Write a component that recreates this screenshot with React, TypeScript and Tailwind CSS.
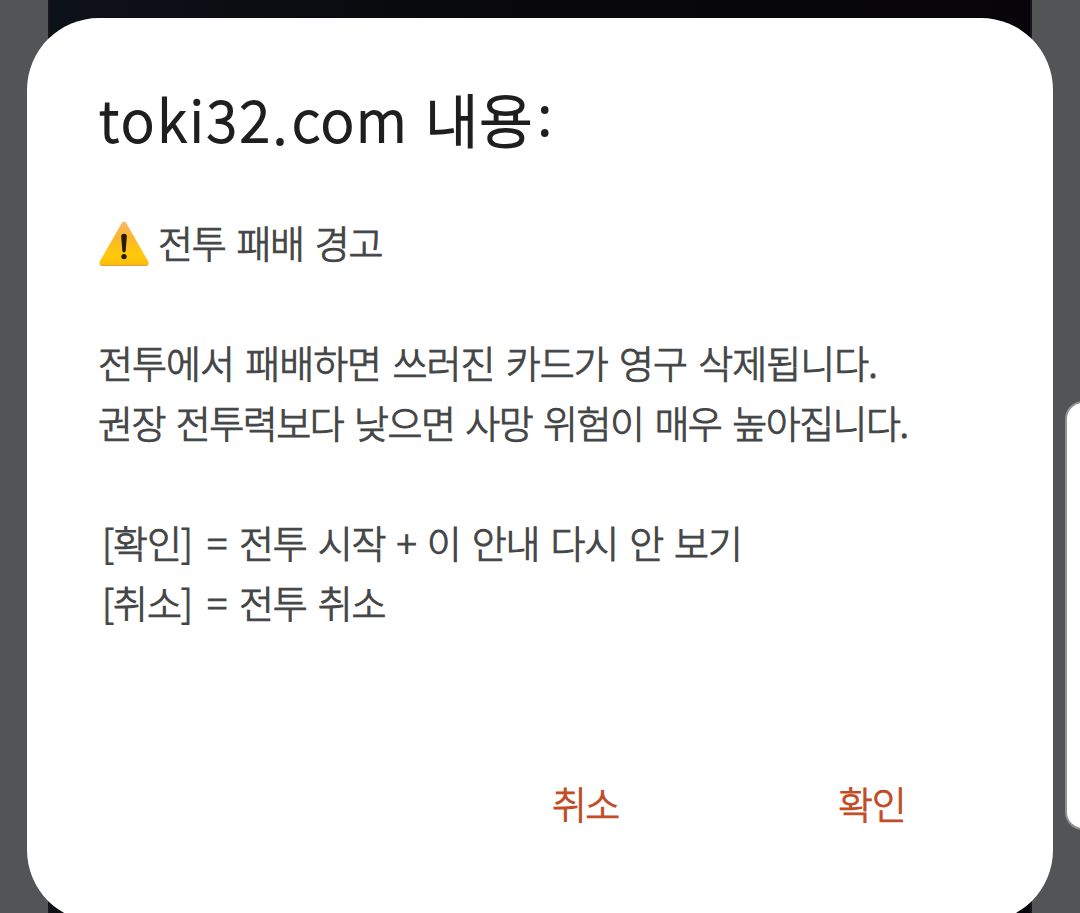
const choices = [
  { label: '[확인]', description: '전투 시작 + 이 안내 다시 안 보기' },
  { label: '[취소]', description: '전투 취소' },
];

function WarningIcon() {
  return (
    <svg viewBox="0 0 50 46" className="relative left-px top-[2px] h-[46px] w-[50px] shrink-0" aria-hidden="true">
      <defs>
        <linearGradient id="warning-fill" x1="0" y1="0" x2="0" y2="1">
          <stop offset="0" stopColor="#fbb66a" />
          <stop offset="0.35" stopColor="#fcb52c" />
          <stop offset="0.75" stopColor="#ffca0a" />
          <stop offset="1" stopColor="#fbbd0c" />
        </linearGradient>
      </defs>
      <path
        d="M22.8 2Q25 -0.6 27.2 2L49.2 40.4Q50.6 44.6 46.8 44.9H3.2Q-0.6 44.6 0.8 40.4Z"
        fill="url(#warning-fill)"
      />
      <path d="M2 43.6Q3 44.4 5 44.4H45Q47 44.4 48 43.6" fill="none" stroke="#e5a23a" strokeWidth="1.2" />
      <path d="M22.2 15.5Q22.2 12.8 25 12.8Q27.8 12.8 27.8 15.5L26.7 29.5Q26.4 31.6 25 31.6Q23.6 31.6 23.3 29.5Z" fill="#241b0b" />
      <circle cx="25" cy="35.6" r="2.7" fill="#241b0b" />
    </svg>
  );
}

function ConfirmDialog() {
  return (
    <div
      role="alertdialog"
      className="absolute left-[27px] top-[18px] h-[904px] w-[1026px] rounded-[72px] bg-white pl-[71px] pt-[58px] text-[38px] font-light leading-[60px] tracking-[-1.3px] text-[#444546] [word-spacing:4px] [-webkit-text-stroke:1px_currentColor]"
    >
      <h1 className="flex h-[84px] items-center whitespace-pre pl-px text-[56px] leading-[84px] text-[#1f1f20] [-webkit-text-stroke:1.9px_currentColor]">
        <span className="w-[174px] tracking-[3px]">toki32</span>
        <span className="relative top-[2px] w-[19px]">.</span>
        <span className="w-[133px] tracking-[2px]">com</span>
        <span className="text-[58px] tracking-[1px]">내용</span>
        <span className="relative -top-[7px] pl-[4px]">:</span>
      </h1>

      <div className="mt-[52px] flex h-[60px] items-center gap-[10px]">
        <WarningIcon />
        <p>전투 패배 경고</p>
      </div>

      <div className="mt-[60px] whitespace-pre">
        <p className="tracking-[-1px]">전투에서 패배하면 쓰러진 카드가 영구 삭제됩니다.</p>
        <p className="tracking-[-1.5px]">권장 전투력보다 낮으면 사망 위험이 매우 높아집니다.</p>
      </div>

      <div className="mt-[60px] whitespace-pre">
        {choices.map((choice) => (
          <p key={choice.label} className="flex pl-[4px]">
            <span className="w-[105px] tracking-[-1px]">{choice.label}</span>
            <span className="w-[32px]">=</span>
            <span className="tracking-[-1.2px]">{choice.description}</span>
          </p>
        ))}
      </div>

      <div className="mt-[141px] flex pl-[454px] text-[#c24b25]">
        <button type="button" className="w-[286px] text-left tracking-[-1.6px]">취소</button>
        <button type="button" className="text-left tracking-[-1.3px]">확인</button>
      </div>
    </div>
  );
}

export default function App() {
  return (
    <div className="relative flex h-[913px] w-[1080px] overflow-hidden bg-[#535456] font-['Noto_Sans_CJK_KR',sans-serif]">
      <div className="mx-[48px] flex-1 border-x-2 border-[#18161a] bg-linear-to-r from-[#0d1118] via-[#08080b] to-[#07050a]" />
      {/* edge panel handle */}
      <div className="absolute left-[1065px] top-[401px] h-[429px] w-[40px] rounded-[18px] border-2 border-[#929292] bg-white" />
      <ConfirmDialog />
    </div>
  );
}
